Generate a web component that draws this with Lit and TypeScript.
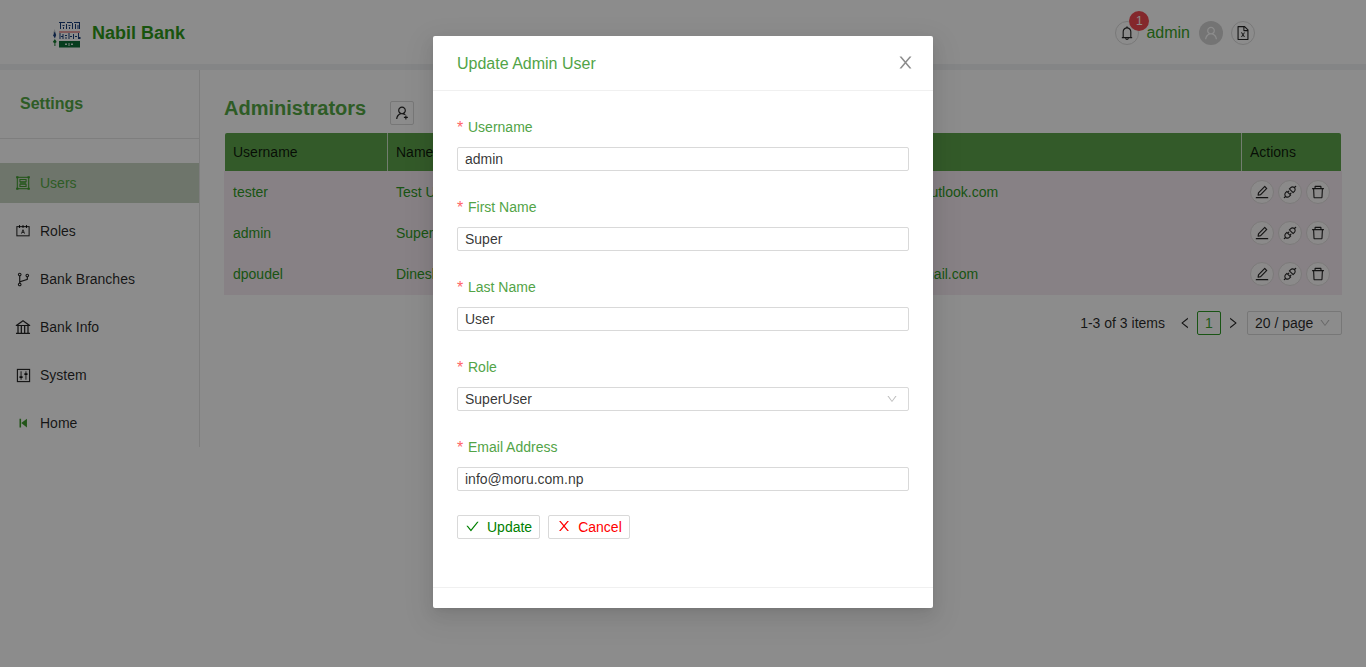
import { LitElement, html, css, svg } from "lit";
import { customElement } from "lit/decorators.js";

const P = {
  userAdd: "M678.3 642.4c24.2-13 51.9-20.4 81.4-20.4h.1c3 0 4.4-3.6 2.2-5.6a371.67 371.67 0 0 0-103.7-65.8c-.4-.2-.8-.3-1.2-.5C719.2 505 759.6 431.7 759.6 349c0-137-110.8-248-247.5-248S264.7 212 264.7 349c0 82.7 40.4 156 102.6 201.1-.4.2-.8.3-1.2.5-44.7 18.9-84.8 46-119.3 80.6a373.42 373.42 0 0 0-80.4 119.5A373.6 373.6 0 0 0 137 888.8a8 8 0 0 0 8 8.2h59.9c4.3 0 7.9-3.5 8-7.8 2-77.2 32.9-149.5 87.6-204.3C357 628.2 432.2 597 512.2 597c56.7 0 111.1 15.7 158 45.1a8.1 8.1 0 0 0 8.1.3zM512.2 521c-45.8 0-88.9-17.9-121.4-50.4A171.2 171.2 0 0 1 340.5 349c0-45.9 17.9-89.1 50.3-121.6S466.3 177 512.2 177s88.9 17.9 121.4 50.4A171.2 171.2 0 0 1 683.9 349c0 45.9-17.9 89.1-50.3 121.6C601.1 503.1 558 521 512.2 521zM880 759h-84v-84c0-4.4-3.6-8-8-8h-56c-4.4 0-8 3.6-8 8v84h-84c-4.4 0-8 3.6-8 8v56c0 4.4 3.6 8 8 8h84v84c0 4.4 3.6 8 8 8h56c4.4 0 8-3.6 8-8v-84h84c4.4 0 8-3.6 8-8v-56c0-4.4-3.6-8-8-8z",
  edit: "M257.7 752c2 0 4-.2 6-.5L431.9 722c2-.4 3.9-1.3 5.3-2.8l423.9-423.9a9.96 9.96 0 0 0 0-14.1L694.9 114.9c-1.9-1.9-4.4-2.9-7.1-2.9s-5.2 1-7.1 2.9L256.8 538.8c-1.5 1.5-2.4 3.3-2.8 5.3l-29.5 168.2a33.5 33.5 0 0 0 9.4 29.8c6.6 6.4 14.9 9.9 23.8 9.9zm67.4-174.4L687.8 215l73.3 73.3-362.7 362.6-88.9 15.7 15.6-89zM880 836H144c-17.7 0-32 14.3-32 32v36c0 4.4 3.6 8 8 8h784c4.4 0 8-3.6 8-8v-36c0-17.7-14.3-32-32-32z",
  api: "M917.7 148.8l-42.4-42.4c-1.6-1.6-3.7-2.3-5.7-2.3s-4.1.8-5.7 2.3l-76.1 76.1a199.27 199.27 0 0 0-112.1-34.3c-51.2 0-102.4 19.5-141.5 58.6L432.3 308.7a8.03 8.03 0 0 0 0 11.3L704 591.7c1.6 1.6 3.6 2.3 5.7 2.3 2 0 4.1-.8 5.7-2.3l101.9-101.9c68.9-69 77-175.7 24.3-253.5l76.1-76.1c3.1-3.2 3.1-8.3 0-11.4zM769.1 441.7l-59.4 59.4-186.8-186.8 59.4-59.4c24.9-24.9 58.1-38.7 93.4-38.7 35.3 0 68.4 13.7 93.4 38.7 24.9 24.9 38.7 58.1 38.7 93.4 0 35.3-13.8 68.4-38.7 93.4zm-190.2 105a8.03 8.03 0 0 0-11.3 0L501 613.3 410.7 523l66.7-66.7c3.1-3.1 3.1-8.2 0-11.3L441 408.6a8.03 8.03 0 0 0-11.3 0L363 475.3l-43-43a7.85 7.85 0 0 0-5.7-2.3c-2 0-4.1.8-5.7 2.3L206.8 534.2c-68.9 69-77 175.7-24.3 253.5l-76.1 76.1a8.03 8.03 0 0 0 0 11.3l42.4 42.4c1.6 1.6 3.6 2.3 5.7 2.3s4.1-.8 5.7-2.3l76.1-76.1c33.7 22.9 72.9 34.3 112.1 34.3 51.2 0 102.4-19.5 141.5-58.6l101.9-101.9c3.1-3.1 3.1-8.2 0-11.3l-43-43 66.7-66.7c3.1-3.1 3.1-8.2 0-11.3l-36.6-36.2zM441.7 769.1a131.32 131.32 0 0 1-93.4 38.7c-35.3 0-68.4-13.7-93.4-38.7a131.32 131.32 0 0 1-38.7-93.4c0-35.3 13.7-68.4 38.7-93.4l59.4-59.4 186.8 186.8-59.4 59.4z",
  trash: "M360 184h-8c4.4 0 8-3.6 8-8v8h304v-8c0 4.4 3.6 8 8 8h-8v72h72v-80c0-35.3-28.7-64-64-64H352c-35.3 0-64 28.7-64 64v80h72v-72zm504 72H160c-17.7 0-32 14.3-32 32v32c0 4.4 3.6 8 8 8h60.4l24.7 523c1.6 34.1 29.8 61 63.9 61h454c34.2 0 62.3-26.8 63.9-61l24.7-523H888c4.4 0 8-3.6 8-8v-32c0-17.7-14.3-32-32-32zM731.3 840H292.7l-24.2-512h487l-24.2 512z",
  bell: "M816 768h-24V428c0-141.1-104.3-257.7-240-277.1V112c0-22.1-17.9-40-40-40s-40 17.9-40 40v38.9c-135.7 19.4-240 136-240 277.1v340h-24c-17.7 0-32 14.3-32 32v32c0 4.4 3.6 8 8 8h216c0 61.8 50.2 112 112 112s112-50.2 112-112h216c4.4 0 8-3.6 8-8v-32c0-17.7-14.3-32-32-32zM512 888c-26.5 0-48-21.5-48-48h96c0 26.5-21.5 48-48 48zM304 768V428c0-55.6 21.6-107.8 60.9-147.1S456.4 220 512 220c55.6 0 107.8 21.6 147.1 60.9S720 372.4 720 428v340H304z",
  excel: "M854.6 288.6L639.4 73.4c-6-6-14.1-9.4-22.6-9.4H192c-17.7 0-32 14.3-32 32v832c0 17.7 14.3 32 32 32h640c17.7 0 32-14.3 32-32V311.3c0-8.5-3.4-16.7-9.4-22.7zM790.2 326H602V137.8L790.2 326zm1.8 562H232V136h302v216a42 42 0 0 0 42 42h216v494zM514.1 580.1l-61.8-102.4c-2.2-3.6-6.1-5.8-10.3-5.8h-38.4c-2.3 0-4.5.6-6.4 1.9-5.6 3.5-7.3 10.9-3.7 16.6l82.3 130.4-83.4 132.8a12.04 12.04 0 0 0 10.2 18.4h34.5c4.2 0 8-2.2 10.2-5.7L510 664.8l62.3 101.4c2.2 3.6 6.1 5.7 10.2 5.7H620c2.3 0 4.5-.7 6.5-1.9 5.6-3.6 7.2-11 3.6-16.6l-84-130.4 85.3-132.5a12.04 12.04 0 0 0-10.1-18.5h-35.7c-4.2 0-8.1 2.2-10.3 5.8l-61.2 102.3z",
  check: "M912 190h-69.9c-9.8 0-19.1 4.5-25.1 12.2L404.7 724.5 207 474a32 32 0 0 0-25.1-12.2H112c-6.7 0-10.4 7.7-6.3 12.9l273.9 347c12.8 16.2 37.4 16.2 50.3 0l488.4-618.9c4.1-5.1.4-12.8-6.3-12.8z",
  close: "M563.8 512l262.5-312.9c4.4-5.2.7-13.1-6.1-13.1h-79.8c-4.7 0-9.2 2.1-12.3 5.7L511.6 449.8 295.1 191.7c-3-3.6-7.5-5.7-12.3-5.7H203c-6.8 0-10.5 7.9-6.1 13.1L459.4 512 196.9 824.9A7.95 7.95 0 0 0 203 838h79.8c4.7 0 9.2-2.1 12.3-5.7l216.5-258.1 216.500 258.1c3 3.6 7.5 5.7 12.3 5.7h79.8c6.8 0 10.5-7.9 6.1-13.1L563.8 512z",
  down: "M884 256h-75c-5.1 0-9.9 2.5-12.900 6.6L512 654.2 227.900 262.6c-3-4.1-7.800-6.6-12.900-6.6h-75c-6.500 0-10.300 7.400-6.500 12.700l352.600 486.100c12.800 17.600 39 17.600 51.700 0l352.600-486.100c3.900-5.300.1-12.700-6.400-12.700z",
  left: "M724 218.300V141c0-6.700-7.700-10.400-12.900-6.300L260.300 486.800a31.860 31.860 0 0 0 0 50.300l450.800 352.100c5.300 4.100 12.900.4 12.900-6.300v-77.300c0-4.900-2.300-9.600-6.100-12.600l-360-281 360-281.100c3.800-3 6.100-7.700 6.100-12.600z",
  right: "M765.700 486.800L314.900 134.700A7.970 7.970 0 0 0 302 141v77.300c0 4.900 2.300 9.600 6.100 12.600l360 281.100-360 281.100c-3.900 3-6.100 7.700-6.100 12.600V883c0 6.700 7.700 10.400 12.900 6.300l450.800-352.100a31.960 31.960 0 0 0 0-50.400z",
  person: "M858.500 763.600a374 374 0 0 0-80.600-119.500 375.630 375.630 0 0 0-119.500-80.600c-.4-.2-.8-.3-1.200-.5C719.500 518 760 444.700 760 362c0-137-111-248-248-248S264 225 264 362c0 82.700 40.500 156 102.800 201.100-.4.2-.8.3-1.200.5-44.800 18.900-85 46-119.500 80.600a375.630 375.630 0 0 0-80.600 119.500A370.740 370.740 0 0 0 136 901.800a8 8 0 0 0 8 8.200h60c4.400 0 7.900-3.500 8-7.800 2-77.200 33-149.500 87.800-204.300 56.700-56.700 132-87.900 212.200-87.900s155.500 31.200 212.200 87.900C779 752.700 810 825 812 902.200c.1 4.400 3.600 7.800 8 7.800h60a8 8 0 0 0 8-8.200c-1-47.800-10.900-94.300-29.500-138.200zM512 534c-45.900 0-89.100-17.900-121.600-50.400S340 407.900 340 362c0-45.900 17.900-89.100 50.400-121.600S466.100 190 512 190s89.100 17.900 121.600 50.400S684 316.100 684 362c0 45.900-17.900 89.100-50.400 121.600S557.900 534 512 534z",
  branch: "M740 161c-61.800 0-112 50.200-112 112 0 50.100 33.100 92.600 78.500 106.900v95.900L320 602.400V318.100c44.200-15 76-56.900 76-106.100 0-61.800-50.200-112-112-112s-112 50.200-112 112c0 49.200 31.800 91 76 106.100V706c-44.200 15-76 56.900-76 106.100 0 61.800 50.200 112 112 112s112-50.200 112-112c0-49.200-31.800-91-76-106.100v-27.800l423.500-138.700a50.520 50.520 0 0 0 34.900-48.200V378.200c42.900-15.800 73.600-57 73.600-105.200 0-61.800-50.200-112-112-112zm-504 51a48.010 48.010 0 0 1 96 0 48.010 48.010 0 0 1-96 0zm96 600a48.010 48.010 0 0 1-96 0 48.010 48.010 0 0 1 96 0zm408-491a48.010 48.010 0 0 1 0-96 48.010 48.010 0 0 1 0 96z",
  bank: "M894 462c30.900 0 43.800-39.700 18.700-58L530.800 126.200a31.810 31.810 0 0 0-37.600 0L111.300 404c-25.100 18.200-12.200 58 18.800 58H192v374h-72c-4.400 0-8 3.600-8 8v52c0 4.400 3.600 8 8 8h784c4.400 0 8-3.600 8-8v-52c0-4.400-3.600-8-8-8h-72V462h62zM512 196.700l271.100 197.200H240.900L512 196.700zM264 462h117v374H264V462zm189 0h117v374H453V462zm307 374H642V462h118v374z",
};

const ant = (size: number, d: string) => html`<svg class="ic" width=${size} height=${size} viewBox="0 0 1024 1024" fill="currentColor"><path d=${d}></path></svg>`;
const ic = (size: number, body: unknown) => html`<svg class="ic" width=${size} height=${size} viewBox="0 0 16 16" fill="none" stroke="currentColor" stroke-width="1.2">${body}</svg>`;

const menuIcons: Record<string, unknown> = {
  users: ic(14, svg`<rect x="1.5" y="1.5" width="13" height="13"/><path d="M4.5 4h7v2.500h-7zM4.500 8h7M4.5 9.500h7v2.500h-7z"/><path stroke-width="2.200" d="M0.200 1.500h2.600M0.200 14.500h2.600M13.200 1.500h2.600M13.200 14.500h2.600"/>`),
  roles: ic(14, svg`<rect x="1" y="3" width="14" height="10.500"/><path d="M4 1v3.500M8 1v3.500M12 1v3.500"/><path stroke-width="1" d="M6.200 11l1.800-4.500 1.800 4.500M6.900 9.600h2.200"/>`),
  branch: ant(17, P.branch),
  bank: ant(18, P.bank),
  system: ic(15, svg`<rect x="1.500" y="1.500" width="13" height="13"/><path d="M5.400 3.500v9M10.600 3.500v9" stroke-width="1"/><path fill="currentColor" stroke="none" d="M3.700 8.800h3.400v1.800H3.700zM8.900 5.600h3.400v1.800H8.900z"/>`),
  home: ic(14, svg`<path fill="currentColor" stroke="none" d="M4 3h1.800v10H4zM12.500 3v10L6 8z"/>`),
};

const logo = svg`<svg class="logo" width="30" height="27" viewBox="0 0 30 27">
  <path fill="#c9d0d4" d="M3.500 8l1.600 4-1.600 2-1.400-2z"/>
  <path fill="#1b3f7a" d="M3.700 10.500l1.500 3.500-1.300 3.500-1.700-3z"/>
  <path fill="#16792f" d="M3.900 18l1.800 3-1.300 1v3h-1v-3L1.800 21z"/>
  <g fill="#1b3f7a">
    <path d="M8 1h6v1H8zM16 1h5v1h-5zM23 1h6v1h-6z"/>
    <path d="M9 2h1v6H9zM11.500 4h2v1h-2zM12 6h1v2h-1zM15 3h1v5h-1zM17.500 4h2v1h-2zM18 6h1v2h-1zM21 2h1v6h-1zM24 3h1v5h-1zM26.500 4h1v4h-1zM28 2h1v6h-1z"/>
    <path d="M8.500 12h1v6h-1zM10 15h2.500v1H10zM11.500 13h1v5h-1zM14 14h2v1h-2zM14.500 16h1v2h-1zM17.500 12h1v6h-1zM19 15h2v1h-2zM22 13h1v5h-1zM24 15h2v1h-2zM27 12h1v6h-1zM28 16h1.500v2H28z"/>
  </g>
  <rect x="8" y="10.500" width="21" height="1" fill="#d84a4a"/>
  <rect x="8" y="20" width="21" height="6.500" fill="#0b6d37"/>
  <path fill="#dfeee5" d="M14 22.500h2v1.500h-2zM17.500 22h1v3h-1zM20 22.500h2v1.500h-2z"/>
</svg>`;

const menu = [
  ["users", "Users"], ["roles", "Roles"], ["branch", "Bank Branches"],
  ["bank", "Bank Info"], ["system", "System"], ["home", "Home"],
] as const;

const rows = [
  ["tester", "Test User", "tester.dev.moru@outlook.com"],
  ["admin", "Super User", "info@moru.com.np"],
  ["dpoudel", "Dinesh", "dinesh.poudel@gmail.com"],
];

const fields = [
  ["Username", "admin"], ["First Name", "Super"], ["Last Name", "User"],
  ["Role", "SuperUser"], ["Email Address", "info@moru.com.np"],
];

@customElement("app-root")
export class AppRoot extends LitElement {
  static styles = css`
    :host { display: block; height: 667px; overflow: hidden; position: relative; background: #fff;
      font-family: "Liberation Sans", Arial, sans-serif; font-size: 14px; color: rgba(0,0,0,.85);
      font-feature-settings: "tnum"; }
    .ic { display: block; flex: none; }
    .top { height: 64px; box-sizing: border-box; padding: 2px 111px 0 51px; display: flex; align-items: center; justify-content: space-between; }
    .brand { display: flex; align-items: center; gap: 11px; font-size: 18px; font-weight: 700; color: #2f9a1a; }
    .logo { display: block; margin-top: 3px; }
    .tools { display: flex; align-items: center; gap: 8px; }
    .round { width: 24px; height: 24px; box-sizing: border-box; border-radius: 50%; border: 1px solid #dcdcdc; display: flex; align-items: center; justify-content: center; color: rgba(0,0,0,.85); flex: none; }
    .bellwrap { position: relative; }
    .badge { position: absolute; left: 13px; top: -11px; width: 20px; height: 20px; border-radius: 50%; background: #f04a50; color: #fff; font-size: 12px; line-height: 20px; text-align: center; }
    .who { font-size: 16px; color: #38a226; margin: 0 1px 0 -1px; }
    .avatar { width: 24px; height: 24px; border-radius: 50%; background: #d4d4d4; color: #fff; display: flex; align-items: center; justify-content: center; }
    .strip { height: 6px; background: #f0f2f5; }
    .main { display: flex; align-items: flex-start; }
    .side { width: 199px; height: 377px; border-right: 1px solid #e6e6e6; flex: none; }
    .side h3 { margin: 0; height: 69px; box-sizing: border-box; border-bottom: 1px solid #e6e6e6; padding: 25px 0 0 20px; font-size: 16px; line-height: 18px; font-weight: 700; color: #55a845; }
    .menu { padding-top: 24px; display: flex; flex-direction: column; gap: 8px; }
    .item { height: 40px; display: flex; align-items: center; gap: 10px; padding-left: 16px; }
    .mi { width: 14px; display: flex; justify-content: center; color: rgba(0,0,0,.85); }
    .item.active { background: #c8d5c4; color: #55a845; }
    .item.active .mi { color: #3e9c2c; }
    .item.home .mi { color: #3e9c2c; }
    .content { flex: 1; padding: 26px 24px 0; min-width: 0; }
    .title { display: flex; align-items: flex-start; gap: 24px; margin-bottom: 8px; }
    .title h2 { margin: 0; font-size: 20px; line-height: 24px; font-weight: 700; color: #55a845; }
    .addbtn { width: 24px; height: 24px; margin-top: 5px; box-sizing: border-box; border: 1px solid #d9d9d9; border-radius: 2px; display: flex; align-items: center; justify-content: center; }
    .grid { display: grid; grid-template-columns: 164px 417px 1fr 100px; }
    .head { height: 38px; margin: 0 1px; grid-template-columns: 163px 417px 1fr 99px; background: #5da54b; border-radius: 2px 2px 0 0; }
    .head div { padding-left: 8px; line-height: 38px; border-right: 1px solid #cfe3ca; }
    .head div:nth-child(2), .head div:last-child { border-right: 0; }
    .body { background: #f6ebf3; padding-bottom: 1px; }
    .row { height: 41px; align-items: center; color: #2f9a25; }
    .row > div { padding-left: 8px; white-space: nowrap; }
    .row > div:first-child { padding-left: 9px; }
    .acts { display: flex; gap: 4px; }
    .acts .round { background: #fdfbfb; border-color: #e2dede; }
    .pager { display: flex; align-items: center; justify-content: flex-end; margin-top: 16px; height: 24px; }
    .pager .total { margin-right: 8px; }
    .arrow { width: 24px; height: 24px; display: flex; align-items: center; justify-content: center; }
    .pg { width: 24px; height: 24px; box-sizing: border-box; border: 1px solid #2f9a25; border-radius: 2px; text-align: center; line-height: 22px; color: #3fa52e; }
    .size { width: 95px; height: 24px; margin-left: 2px; box-sizing: border-box; border: 1px solid #d9d9d9; border-radius: 2px; padding: 0 10px 0 7px; display: flex; align-items: center; justify-content: space-between; }
    .size .ic { color: #bfbfbf; }
    .mask { position: absolute; inset: 0; background: rgba(0,0,0,.45); }
    .modal { position: absolute; left: 433px; top: 36px; width: 500px; height: 572px; background: #fff; border-radius: 2px; display: flex; flex-direction: column;
      box-shadow: 0 3px 6px -4px rgba(0,0,0,.12), 0 6px 16px rgba(0,0,0,.08), 0 9px 28px 8px rgba(0,0,0,.05); }
    .mhead { height: 55px; box-sizing: border-box; border-bottom: 1px solid #f0f0f0; padding: 1px 18px 0 24px; display: flex; align-items: center; justify-content: space-between; font-size: 16px; color: #52a447; }
    .mhead .ic { color: rgba(0,0,0,.45); margin-top: -2px; }
    .mbody { flex: 1; padding: 24px 24px 0; }
    .field { margin-bottom: 24px; }
    .lab { height: 24px; line-height: 24px; color: #52a447; margin-bottom: 8px; display: flex; gap: 5px; }
    .star { color: #ff6468; width: 6px; font-size: 16px; line-height: 25px; }
    .inp { height: 24px; box-sizing: border-box; border: 1px solid #d9d9d9; border-radius: 2px; padding: 0 7px; line-height: 22px; display: flex; align-items: center; justify-content: space-between; color: rgba(0,0,0,.8); }
    .inp .ic { color: #bfbfbf; margin-right: 3px; }
    .acts2 { display: flex; gap: 8px; }
    .btn { height: 24px; box-sizing: border-box; border: 1px solid #d9d9d9; border-radius: 2px; padding: 0 7px; display: flex; align-items: center; gap: 7px; }
    .btn .ic { margin-top: -2px; }
    .btn.ok { color: #008000; }
    .btn.no { color: #ff0000; gap: 6px; }
    .mfoot { height: 21px; box-sizing: border-box; border-top: 1px solid #f0f0f0; }
  `;

  render() {
    return html`
      <div class="top">
        <div class="brand">${logo}<span>Nabil Bank</span></div>
        <div class="tools">
          <div class="bellwrap round">${ant(16, P.bell)}<span class="badge">1</span></div>
          <span class="who">admin</span>
          <div class="avatar">${ant(16, P.person)}</div>
          <div class="round">${ant(16, P.excel)}</div>
        </div>
      </div>
      <div class="strip"></div>
      <div class="main">
        <aside class="side">
          <h3>Settings</h3>
          <nav class="menu">
            ${menu.map(([k, label]) => html`<div class="item ${k === "users" ? "active" : ""} ${k === "home" ? "home" : ""}"><span class="mi">${menuIcons[k]}</span><span>${label}</span></div>`)}
          </nav>
        </aside>
        <section class="content">
          <div class="title">
            <h2>Administrators</h2>
            <div class="addbtn">${ant(16, P.userAdd)}</div>
          </div>
          <div class="grid head"><div>Username</div><div>Name</div><div>Email</div><div>Actions</div></div>
          <div class="body">
            ${rows.map((r) => html`<div class="grid row">
              <div>${r[0]}</div><div>${r[1]}</div><div>${r[2]}</div>
              <div class="acts">
                <span class="round">${ant(16, P.edit)}</span>
                <span class="round">${ant(16, P.api)}</span>
                <span class="round">${ant(16, P.trash)}</span>
              </div>
            </div>`)}
          </div>
          <div class="pager">
            <span class="total">1-3 of 3 items</span>
            <span class="arrow">${ant(14, P.left)}</span>
            <span class="pg">1</span>
            <span class="arrow">${ant(14, P.right)}</span>
            <div class="size"><span>20 / page</span>${ant(12, P.down)}</div>
          </div>
        </section>
      </div>
      <div class="mask"></div>
      <div class="modal" role="dialog">
        <div class="mhead"><span>Update Admin User</span>${ant(19, P.close)}</div>
        <div class="mbody">
          ${fields.map(([l, v]) => html`<div class="field">
            <div class="lab"><span class="star">*</span><span>${l}</span></div>
            <div class="inp"><span>${v}</span>${l === "Role" ? ant(12, P.down) : ""}</div>
          </div>`)}
          <div class="acts2">
            <div class="btn ok">${ant(15, P.check)}<span>Update</span></div>
            <div class="btn no">${ant(16, P.close)}<span>Cancel</span></div>
          </div>
        </div>
        <div class="mfoot"></div>
      </div>
    `;
  }
}
